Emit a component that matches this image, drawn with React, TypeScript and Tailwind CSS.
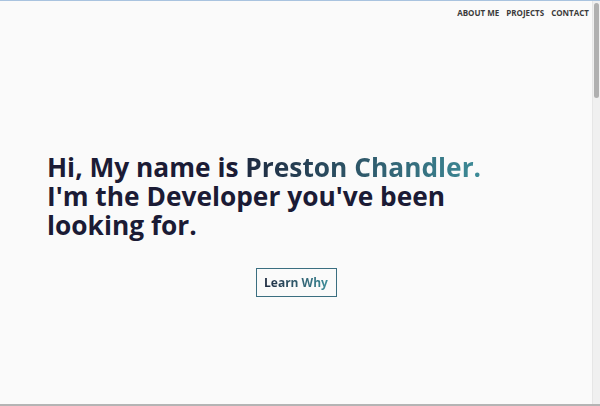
export default function App() {
  return (
    <div className="h-[406px] w-[600px] overflow-hidden bg-[#fafafa] border-t border-[#a9c3df] border-b-2 border-b-[#b4b4b4] flex font-['Open_Sans',sans-serif]">
      <div className="flex-1 flex flex-col">
        {/* Nav */}
        <nav className="flex justify-end gap-[7px] pr-[3px] pt-[6px] text-[8px] font-bold text-[#3b3b3b]">
          <a>ABOUT ME</a>
          <a>PROJECTS</a>
          <a>CONTACT</a>
        </nav>

        {/* Hero */}
        <section className="pl-[47px] pt-[134px]">
          <h1 className="text-[26.3px] leading-[29px] font-bold text-[#1b1b35]">
            Hi, My name is{' '}
            <span className="bg-gradient-to-r from-[#1e2a40] to-[#3d8c98] bg-clip-text text-transparent">
              Preston Chandler.
            </span>
            <br />
            I'm the Developer you've been
            <br />
            looking for.
          </h1>
        </section>

        <div className="flex justify-center pt-[28px]">
          <button className="w-[81px] h-[29px] border border-[#3a6e80] text-[12px] font-bold">
            <span className="bg-gradient-to-r from-[#1e2a40] to-[#3d8c98] bg-clip-text text-transparent">Learn Why</span>
          </button>
        </div>
      </div>

      {/* Scrollbar */}
      <div className="w-[8px] flex flex-col bg-[#f0f0f0] border-l border-[#e6e6e6]">
        <div className="mt-[2px] ml-[1px] w-[5px] h-[95px] rounded-full bg-[#b0b0b0]" />
      </div>
    </div>
  );
}
